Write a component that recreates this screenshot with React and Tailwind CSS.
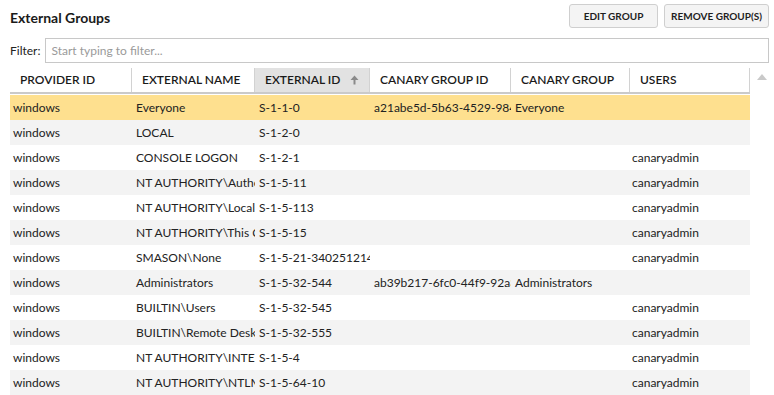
import React from "react";

const columns = [
  { key: "provider", label: "PROVIDER ID", width: "w-[122px]" },
  { key: "name", label: "EXTERNAL NAME", width: "w-[123px]" },
  { key: "extId", label: "EXTERNAL ID", width: "w-[115px]", sorted: true },
  { key: "groupId", label: "CANARY GROUP ID", width: "w-[141px]" },
  { key: "group", label: "CANARY GROUP", width: "w-[119px]" },
  { key: "users", label: "USERS", width: "w-[120px]" },
];

const rows = [
  { provider: "windows", name: "Everyone", extId: "S-1-1-0", groupId: "a21abe5d-5b63-4529-9842", group: "Everyone", users: "" },
  { provider: "windows", name: "LOCAL", extId: "S-1-2-0", groupId: "", group: "", users: "" },
  { provider: "windows", name: "CONSOLE LOGON", extId: "S-1-2-1", groupId: "", group: "", users: "canaryadmin" },
  { provider: "windows", name: "NT AUTHORITY\\Authenticated Users", extId: "S-1-5-11", groupId: "", group: "", users: "canaryadmin" },
  { provider: "windows", name: "NT AUTHORITY\\Local account", extId: "S-1-5-113", groupId: "", group: "", users: "canaryadmin" },
  { provider: "windows", name: "NT AUTHORITY\\This Organization", extId: "S-1-5-15", groupId: "", group: "", users: "canaryadmin" },
  { provider: "windows", name: "SMASON\\None", extId: "S-1-5-21-3402512141", groupId: "", group: "", users: "canaryadmin" },
  { provider: "windows", name: "Administrators", extId: "S-1-5-32-544", groupId: "ab39b217-6fc0-44f9-92a3", group: "Administrators", users: "" },
  { provider: "windows", name: "BUILTIN\\Users", extId: "S-1-5-32-545", groupId: "", group: "", users: "canaryadmin" },
  { provider: "windows", name: "BUILTIN\\Remote Desktop Users", extId: "S-1-5-32-555", groupId: "", group: "", users: "canaryadmin" },
  { provider: "windows", name: "NT AUTHORITY\\INTERACTIVE", extId: "S-1-5-4", groupId: "", group: "", users: "canaryadmin" },
  { provider: "windows", name: "NT AUTHORITY\\NTLM Authentication", extId: "S-1-5-64-10", groupId: "", group: "", users: "canaryadmin" },
];

function Button({ className, children }) {
  return (
    <button
      className={`h-[24px] rounded-[3px] border border-[#cfcfcf] bg-[#f4f4f4] text-[10px] font-bold text-[#1e1e1e] text-center ${className}`}
    >
      {children}
    </button>
  );
}

export default function App() {
  return (
    <div
      className="w-[774px] h-[395px] overflow-hidden bg-white text-[#222]"
      style={{ fontFamily: "Lato, 'Noto Sans', sans-serif" }}
    >
      <div className="flex items-center justify-between pl-[10px] pr-[5px] pt-[4px]">
        <h1 className="text-[14px] font-bold text-[#1a1a1a] leading-none pt-[4px]">External Groups</h1>
        <div className="flex gap-[6px]">
          <Button className="w-[89px]">EDIT GROUP</Button>
          <Button className="w-[105px]">REMOVE GROUP(S)</Button>
        </div>
      </div>

      <div className="flex items-center gap-[5px] pl-[10px] pr-[5px] mt-[10px]">
        <span className="text-[12px] text-[#222] pt-[1px]">Filter:</span>
        <input
          className="flex-1 h-[25px] border border-[#c8c8c8] px-[5px] text-[12px] outline-none placeholder:text-[#9a9a9a]"
          placeholder="Start typing to filter..."
        />
      </div>

      <div className="flex mt-[5px] pl-[10px]">
        <div className="w-[740px]">
          <div className="flex h-[26px] border-b-2 border-[#cacaca] mb-[1px]">
            {columns.map((c) => (
              <div
                key={c.key}
                className={`${c.width} flex items-center justify-between pl-[10px] pr-[10px] border-r border-[#d2d2d2] text-[12px] font-semibold text-[#1a1a1a] ${c.sorted ? "bg-[#e2e2e2]" : ""}`}
              >
                <span>{c.label}</span>
                {c.sorted && (
                  <svg width="9" height="10" viewBox="0 0 9 10" className="text-[#8a8a8a]">
                    <path d="M4.5 0.5 L8.5 5 H5.5 V9.5 H3.5 V5 H0.5 Z" fill="currentColor" />
                  </svg>
                )}
              </div>
            ))}
          </div>
          {rows.map((r, i) => (
            <div
              key={i}
              className={`flex h-[25px] items-center text-[12px] ${
                i === 0 ? "bg-[#fee08f]" : i % 2 === 1 ? "bg-[#f3f3f3]" : "bg-white"
              }`}
            >
              {columns.map((c, j) => (
                <div
                  key={c.key}
                  className={`${c.width} overflow-hidden whitespace-nowrap ${j === 0 ? "pl-[3px]" : j === 5 ? "pl-[2px]" : "pl-[4px]"}`}
                >
                  {r[c.key]}
                </div>
              ))}
            </div>
          ))}
        </div>
        <div className="flex-1 flex justify-center pt-[6px]">
          <svg width="10" height="6" viewBox="0 0 10 6">
            <path d="M5 0 L10 6 H0 Z" fill="#c9c9c9" />
          </svg>
        </div>
      </div>
    </div>
  );
}
